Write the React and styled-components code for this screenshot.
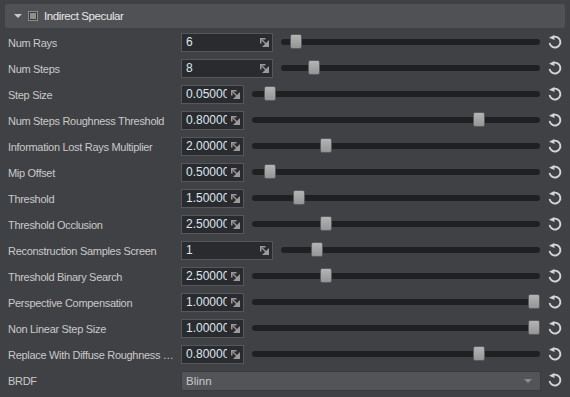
import React from "react";
import styled, { createGlobalStyle } from "styled-components";

const Global = createGlobalStyle`
  html, body { margin: 0; padding: 0; background: #404145; }
  body { font-family: "Liberation Sans", Arial, sans-serif; }
`;

const rows = [
  { label: "Num Rays", value: "6", int: true, pos: 0.036 },
  { label: "Num Steps", value: "8", int: true, pos: 0.109 },
  { label: "Step Size", value: "0.05000", pos: 0.043 },
  { label: "Num Steps Roughness Threshold", value: "0.80000", pos: 0.8 },
  { label: "Information Lost Rays Multiplier", value: "2.00000", pos: 0.246 },
  { label: "Mip Offset", value: "0.50000", pos: 0.043 },
  { label: "Threshold", value: "1.50000", pos: 0.149 },
  { label: "Threshold Occlusion", value: "2.50000", pos: 0.246 },
  { label: "Reconstruction Samples Screen", value: "1", int: true, pos: 0.12 },
  { label: "Threshold Binary Search", value: "2.50000", pos: 0.246 },
  { label: "Perspective Compensation", value: "1.00000", pos: 1 },
  { label: "Non Linear Step Size", value: "1.00000", pos: 1 },
  { label: "Replace With Diffuse Roughness Threshold", value: "0.80000", pos: 0.8 },
];

function App() {
  return (
    <>
      <Global />
      <Panel>
        <Header>
          <Caret />
          <Check><span /></Check>
          <Title>Indirect Specular</Title>
        </Header>
        <Rows>
          {rows.map((r) => (
            <Row key={r.label}>
              <Label>{r.label}</Label>
              <Control>
                <Field $int={r.int}>
                  <FieldText>{r.value}</FieldText>
                  <DragIcon />
                </Field>
                <Track>
                  <Thumb style={{ left: `calc((100% - 12px) * ${r.pos})` }} />
                </Track>
              </Control>
              <ResetIcon />
            </Row>
          ))}
          <Row>
            <Label>BRDF</Label>
            <Select>
              <span>Blinn</span>
              <Arrow />
            </Select>
            <ResetIcon />
          </Row>
        </Rows>
      </Panel>
    </>
  );
}

export default App;

function DragIcon() {
  return (
    <svg width="9" height="9" viewBox="0 0 9 9" style={{ flexShrink: 0 }}>
      <path d="M0 0H5.5V1.5H1.5V5.5H0Z" fill="#9a9a9a" />
      <path d="M1.5 1.5L8 8" stroke="#9a9a9a" strokeWidth="1.3" />
      <path d="M9 2V9H2Z" fill="#9a9a9a" />
    </svg>
  );
}

function ResetIcon() {
  return (
    <ResetBox>
      <svg width="16" height="16" viewBox="0 0 16 16">
        <path
          d="M6.4 2.9 A5.4 5.4 0 1 1 2.8 9.7"
          fill="none"
          stroke="#d4d4d4"
          strokeWidth="1.9"
          strokeLinecap="round"
        />
        <path d="M2 3.7 L7.3 0.9 L7.5 6 Z" fill="#d4d4d4" />
      </svg>
    </ResetBox>
  );
}

const Panel = styled.div`
  width: 570px;
  height: 397px;
  padding: 4px 2px 0 0;
  box-sizing: border-box;
  overflow: hidden;
`;

const Header = styled.div`
  display: flex;
  align-items: center;
  height: 24px;
  margin: 0 3px 0 5px;
  background: #505155;
  border-radius: 2px;
  padding-left: 9px;
`;

const Caret = styled.span`
  width: 0;
  height: 0;
  border-left: 4px solid transparent;
  border-right: 4px solid transparent;
  border-top: 4px solid #c8c8c8;
  margin-right: 6px;
`;

const Check = styled.span`
  width: 10px;
  height: 10px;
  box-sizing: border-box;
  border: 1px solid #8a8a8a;
  background: #3a3b3e;
  display: flex;
  align-items: center;
  justify-content: center;
  margin-right: 6px;
  span {
    width: 6px;
    height: 6px;
    background: #8e8e8e;
  }
`;

const Title = styled.span`
  color: #e8e8e8;
  font-size: 11.5px;
  letter-spacing: -0.4px;
`;

const Rows = styled.div`
  margin-top: 2px;
`;

const Row = styled.div`
  display: grid;
  grid-template-columns: 181px 1fr 26px;
  align-items: center;
  height: 26px;
`;

const Label = styled.div`
  padding-left: 8px;
  padding-right: 4px;
  color: #c9c9c9;
  font-size: 11px;
  letter-spacing: -0.3px;
  white-space: nowrap;
  overflow: hidden;
  text-overflow: ellipsis;
`;

const Control = styled.div`
  display: flex;
  align-items: center;
  gap: 8px;
  padding-bottom: 2px;
`;

const Field = styled.div`
  width: ${(p) => (p.$int ? "92px" : "63px")};
  height: 19px;
  box-sizing: border-box;
  background: #2a2b2e;
  border: 1px solid #56575a;
  display: flex;
  align-items: center;
  padding: 0 3px 0 4px;
  flex-shrink: 0;
`;

const FieldText = styled.span`
  flex: 1;
  overflow: hidden;
  white-space: nowrap;
  color: #dfe6ef;
  font-size: 12px;
  margin-right: 4px;
`;

const Track = styled.div`
  position: relative;
  flex: 1;
  height: 6px;
  background: #1f2022;
  border-radius: 3px;
  margin-right: 2px;
`;

const Thumb = styled.div`
  position: absolute;
  top: -5px;
  width: 12px;
  height: 15px;
  box-sizing: border-box;
  border-radius: 2px;
  border: 1px solid #5a5b5e;
  background: linear-gradient(#b4b4b4, #959595);
`;

const ResetBox = styled.div`
  display: flex;
  align-items: center;
  justify-content: center;
  padding-bottom: 2px;
`;

const Select = styled.div`
  height: 20px;
  box-sizing: border-box;
  background: #535458;
  border: 1px solid #3a3b3e;
  border-radius: 2px;
  display: flex;
  align-items: center;
  justify-content: space-between;
  padding: 0 8px 0 4px;
  margin-right: 1px;
  color: #c9c9c9;
  font-size: 11.5px;
`;

const Arrow = styled.span`
  width: 0;
  height: 0;
  border-left: 4px solid transparent;
  border-right: 4px solid transparent;
  border-top: 4px solid #8c8c8c;
`;
